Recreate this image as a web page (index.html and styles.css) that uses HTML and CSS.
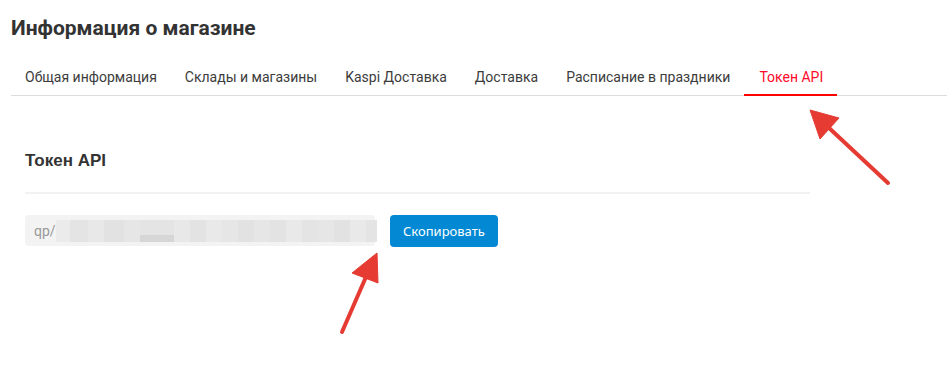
FILE: index.html
```html
<!DOCTYPE html>
<html lang="ru">
<head>
<meta charset="utf-8">
<link rel="stylesheet" href="styles.css">
</head>
<body>
<div class="page">
  <h1 class="title">Информация о магазине</h1>
  <nav class="tabs">
    <a class="tab">Общая информация</a>
    <a class="tab">Склады и магазины</a>
    <a class="tab">Kaspi Доставка</a>
    <a class="tab">Доставка</a>
    <a class="tab">Расписание в праздники</a>
    <a class="tab active">Токен API</a>
  </nav>
  <section class="panel">
    <h2 class="panel-title">Токен API</h2>
    <div class="token-row">
      <div class="token-field">
        <span class="token-prefix">qp/</span>
        <span class="blur">
          <i style="background:#ebebeb;width:14px"></i>
          <i style="background:#e4e4e4;width:18px"></i>
          <i style="background:#e8e8e8;width:16px"></i>
          <i style="background:#e2e2e2;width:20px"></i>
          <i style="background:#e6e6e6;width:16px"></i>
          <i class="dark" style="width:34px"></i>
          <i style="background:#e8e8e8;width:16px"></i>
          <i style="background:#e3e3e3;width:16px"></i>
          <i style="background:#e9e9e9;width:16px"></i>
          <i style="background:#e6e6e6;width:16px"></i>
          <i style="background:#e2e2e2;width:16px"></i>
          <i style="background:#e6e6e6;width:16px"></i>
          <i style="background:#e3e3e3;width:16px"></i>
          <i style="background:#e9e9e9;width:16px"></i>
          <i style="background:#e4e4e4;width:16px"></i>
          <i style="background:#e6e6e6;width:16px"></i>
          <i style="background:#e2e2e2;width:16px"></i>
          <i style="background:#e9e9e9;width:16px"></i>
          <i style="background:#e4e4e4;width:11px"></i>
        </span>
      </div>
      <button class="btn">Скопировать</button>
    </div>
  </section>
</div>
<svg class="arrows" width="947" height="368" viewBox="0 0 947 368">
  <g fill="#e53b32" stroke="#e53b32">
    <line x1="888" y1="183" x2="828" y2="127" stroke-width="4" stroke-linecap="round"/>
    <polygon points="810,110 839,118 820,139" stroke-width="1" stroke-linejoin="round"/>
    <line x1="342" y1="332" x2="369" y2="270" stroke-width="4" stroke-linecap="round"/>
    <polygon points="377,253 378,283 352,273" stroke-width="1" stroke-linejoin="round"/>
  </g>
</svg>
</body>
</html>
```
FILE: styles.css
```css
html, body {
  margin: 0;
  padding: 0;
  background: #fff;
}
body {
  font-family: Roboto, "Liberation Sans", Arial, sans-serif;
  color: #333;
  width: 947px;
  height: 368px;
  overflow: hidden;
  position: relative;
}
.page {
  padding: 14px 0 0 11px;
}
.title {
  margin: 0;
  font-size: 21px;
  font-weight: 700;
  line-height: 28px;
  color: #333;
}
.tabs {
  display: flex;
  margin-top: 18px;
  border-bottom: 1px solid #dcdcdc;
}
.tab {
  padding: 9px 14px 8px;
  font-size: 14px;
  line-height: 17px;
  color: #3c3c3c;
  border-bottom: 2px solid transparent;
  margin-bottom: -1px;
  white-space: nowrap;
}
.tab.active {
  color: #ff0a2a;
  border-bottom-color: #ff0000;
  padding-left: 15px;
  padding-right: 14px;
}
.panel {
  width: 785px;
  padding: 0 14px;
}
.panel-title {
  margin: 0;
  padding: 56px 0 22px;
  font-family: "Liberation Sans", Arial, sans-serif;
  font-size: 17px;
  font-weight: 700;
  line-height: 18px;
  color: #333;
  border-bottom: 2px solid #f2f2f2;
}
.token-row {
  display: flex;
  align-items: flex-start;
  gap: 15px;
  margin-top: 21px;
}
.token-field {
  width: 350px;
  height: 31px;
  box-sizing: border-box;
  background: #f3f3f3;
  border-radius: 4px;
  display: flex;
  align-items: center;
  padding: 0 9px;
}
.token-prefix {
  font-size: 14px;
  color: #999;
}
.blur {
  display: flex;
  height: 22px;
  margin-top: 1px;
}
.blur i {
  display: block;
  height: 100%;
}
.blur i.dark {
  background: linear-gradient(#e4e4e4 0 70%, #d6d6d6 70% 100%);
}
.btn {
  height: 32px;
  padding: 0 13px;
  border: 0;
  border-radius: 4px;
  background: #0389d3;
  color: #fff;
  font-family: "Noto Sans", "Open Sans", sans-serif;
  font-size: 13px;
}
.arrows {
  position: absolute;
  left: 0;
  top: 0;
  pointer-events: none;
}
```
